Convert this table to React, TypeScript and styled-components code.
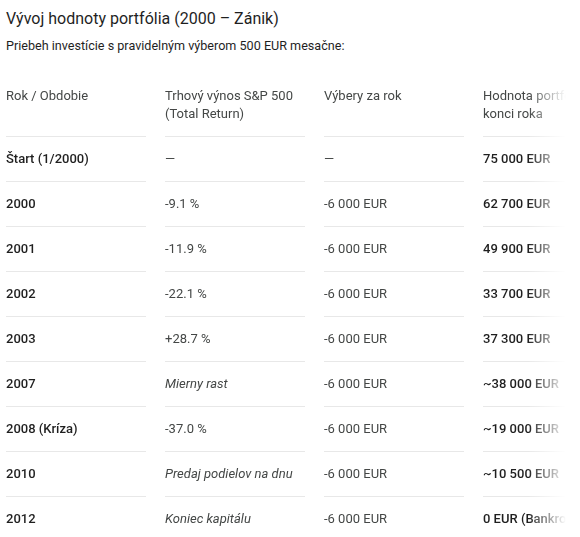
import styled, { createGlobalStyle } from "styled-components";

const GlobalStyle = createGlobalStyle`
  body {
    margin: 0;
    padding: 0;
    background: #ffffff;
    font-family: Roboto, "Noto Sans", Arial, sans-serif;
    color: #1f1f1f;
  }
`;

const Page = styled.div`
  padding: 8px 0 0 6px;
  box-sizing: border-box;
  width: 580px;
  height: 537px;
  overflow: hidden;
`;

const Title = styled.h2`
  margin: 0;
  font-size: 16px;
  line-height: 22px;
  font-weight: 400;
  color: #1f1f1f;
`;

const Subtitle = styled.p`
  margin: 7px 0 0;
  font-size: 12.6px;
  line-height: 18px;
  color: #1f1f1f;
`;

const Scroller = styled.div`
  margin-top: 19px;
  width: 560px;
  overflow: hidden;
  -webkit-mask-image: linear-gradient(to right, #000 522px, transparent 560px);
  mask-image: linear-gradient(to right, #000 522px, transparent 560px);
`;

const Table = styled.div`
  display: grid;
  grid-template-columns: repeat(4, 140px);
  column-gap: 19px;
  width: max-content;
`;

const Cell = styled.div<{ $head?: boolean; $strong?: boolean; $italic?: boolean; $last?: boolean }>`
  padding: 13px 0;
  font-size: 13px;
  line-height: 18px;
  border-bottom: ${(p) => (p.$last ? "none" : "1px solid #e8e8e8")};
  color: ${(p) => (p.$strong ? "#1f1f1f" : "#444746")};
  font-weight: ${(p) => (p.$strong ? 500 : 400)};
  font-style: ${(p) => (p.$italic ? "italic" : "normal")};
  white-space: ${(p) => (p.$head ? "normal" : "nowrap")};
`;

type Row = {
  year: string;
  ret: string;
  italic?: boolean;
  out: string;
  value: string;
};

const rows: Row[] = [
  { year: "Štart (1/2000)", ret: "—", out: "—", value: "75 000 EUR" },
  { year: "2000", ret: "-9.1 %", out: "-6 000 EUR", value: "62 700 EUR" },
  { year: "2001", ret: "-11.9 %", out: "-6 000 EUR", value: "49 900 EUR" },
  { year: "2002", ret: "-22.1 %", out: "-6 000 EUR", value: "33 700 EUR" },
  { year: "2003", ret: "+28.7 %", out: "-6 000 EUR", value: "37 300 EUR" },
  { year: "2007", ret: "Mierny rast", italic: true, out: "-6 000 EUR", value: "~38 000 EUR" },
  { year: "2008 (Kríza)", ret: "-37.0 %", out: "-6 000 EUR", value: "~19 000 EUR" },
  { year: "2010", ret: "Predaj podielov na dnu", italic: true, out: "-6 000 EUR", value: "~10 500 EUR" },
  { year: "2012", ret: "Koniec kapitálu", italic: true, out: "-6 000 EUR", value: "0 EUR (Bankrot)" },
];

const App = () => {
  return (
    <>
      <GlobalStyle />
      <Page>
        <Title>Vývoj hodnoty portfólia (2000 – Zánik)</Title>
        <Subtitle>Priebeh investície s pravidelným výberom 500 EUR mesačne:</Subtitle>
        <Scroller>
          <Table>
            <Cell $head>Rok / Obdobie</Cell>
            <Cell $head>Trhový výnos S&amp;P 500 (Total Return)</Cell>
            <Cell $head>Výbery za rok</Cell>
            <Cell $head>Hodnota portfólia na konci roka</Cell>
            {rows.map((r, i) => {
              const last = i === rows.length - 1;
              return [
                <Cell key={`${i}a`} $strong $last={last}>{r.year}</Cell>,
                <Cell key={`${i}b`} $italic={r.italic} $last={last}>{r.ret}</Cell>,
                <Cell key={`${i}c`} $last={last}>{r.out}</Cell>,
                <Cell key={`${i}d`} $strong $last={last}>{r.value}</Cell>,
              ];
            })}
          </Table>
        </Scroller>
      </Page>
    </>
  );
};

export default App;
